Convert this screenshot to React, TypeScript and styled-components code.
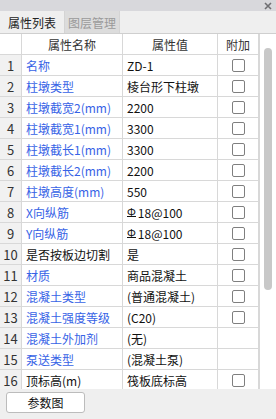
import React from "react";
import styled, { createGlobalStyle } from "styled-components";

const Global = createGlobalStyle`
  html, body { margin: 0; padding: 0; }
  body { background: #efefef; font-family: "Noto Sans CJK SC", "Noto Sans", sans-serif; }
  * { box-sizing: border-box; }
`;

const Panel = styled.div`
  width: 276px;
  height: 419px;
  display: flex;
  flex-direction: column;
  background: #efefef;
  overflow: hidden;
`;

const TitleBar = styled.div`
  height: 11px;
  background: #d8d8dc;
  display: flex;
  justify-content: flex-end;
  align-items: center;
  padding-right: 4px;
`;

const TabStrip = styled.div`
  height: 23px;
  display: flex;
  background: #efefef;
  border-bottom: 1px solid #cfcfcf;
`;

const Tab = styled.div<{ $active?: boolean }>`
  width: ${(p) => (p.$active ? 65 : 55)}px;
  display: flex;
  align-items: center;
  justify-content: center;
  font-size: 12px;
  color: ${(p) => (p.$active ? "#222" : "#9a9a9a")};
  background: ${(p) => (p.$active ? "#efefef" : "#dcdcdc")};
  border-right: 1px solid #d4d4d4;
`;

const Body = styled.div`
  height: 355px;
  display: flex;
  background: #fff;
  overflow: hidden;
`;

const Grid = styled.div`
  width: 259px;
  display: grid;
  grid-template-columns: 22px 101px 95px 41px;
  grid-auto-rows: 21px;
  align-content: start;
`;

const Cell = styled.div<{ $align?: string; $color?: string; $bg?: string }>`
  display: flex;
  align-items: center;
  justify-content: ${(p) => p.$align || "flex-start"};
  padding: 0 4px;
  font-size: 12px;
  color: ${(p) => p.$color || "#111"};
  background: ${(p) => p.$bg || "#fff"};
  border-right: 1px solid #d8d8d8;
  border-bottom: 1px solid #d8d8d8;
  white-space: nowrap;
  overflow: hidden;
`;

const HeadCell = styled(Cell)`
  color: #333;
  justify-content: center;
`;

const IndexCell = styled(Cell)`
  justify-content: center;
  padding: 0;
  font-size: 13px;
  color: #333;
  background: #f1f1f1;
`;

const Check = styled.span`
  width: 13px;
  height: 13px;
  border: 1px solid #7f7f7f;
  border-radius: 2px;
  background: #fff;
`;

const Grade = styled.span`
  display: inline-block;
  font-size: 11px;
  line-height: 10px;
  border-bottom: 1px solid #111;
  margin-right: 2px;
  transform: translateY(-1px);
`;

const ScrollTrack = styled.div`
  width: 17px;
  border-left: 1px solid #d8d8d8;
  background: #fff;
  padding: 14px 0 0 4px;
`;

const Thumb = styled.div`
  width: 8px;
  height: 242px;
  border-radius: 4px;
  background: #c8c8c8;
`;

const Footer = styled.div`
  flex: 1;
  padding: 3px 0 0 6px;
  background: #efefef;
`;

const Button = styled.button`
  width: 79px;
  height: 21px;
  background: #fff;
  border: 1px solid #bcbcbc;
  border-radius: 3px;
  font-family: "Noto Sans CJK SC", sans-serif;
  font-size: 12px;
  color: #111;
  padding: 0;
  display: flex;
  align-items: center;
  justify-content: center;
`;

const BLUE = "#3763e6";

type Row = { name: string; value: React.ReactNode; blue: boolean; check: boolean };

const rebar = (
  <>
    <Grade>Φ</Grade>18@100
  </>
);

const rows: Row[] = [
  { name: "名称", value: "ZD-1", blue: true, check: true },
  { name: "柱墩类型", value: "棱台形下柱墩", blue: true, check: true },
  { name: "柱墩截宽2(mm)", value: "2200", blue: true, check: true },
  { name: "柱墩截宽1(mm)", value: "3300", blue: true, check: true },
  { name: "柱墩截长1(mm)", value: "3300", blue: true, check: true },
  { name: "柱墩截长2(mm)", value: "2200", blue: true, check: true },
  { name: "柱墩高度(mm)", value: "550", blue: true, check: true },
  { name: "X向纵筋", value: rebar, blue: true, check: true },
  { name: "Y向纵筋", value: rebar, blue: true, check: true },
  { name: "是否按板边切割", value: "是", blue: false, check: true },
  { name: "材质", value: "商品混凝土", blue: true, check: true },
  { name: "混凝土类型", value: "(普通混凝土)", blue: true, check: true },
  { name: "混凝土强度等级", value: "(C20)", blue: true, check: true },
  { name: "混凝土外加剂", value: "(无)", blue: true, check: false },
  { name: "泵送类型", value: "(混凝土泵)", blue: true, check: false },
  { name: "顶标高(m)", value: "筏板底标高", blue: false, check: true },
];

export default function App() {
  return (
    <Panel>
      <Global />
      <TitleBar>
        <svg width="8" height="8" viewBox="0 0 8 8">
          <path d="M1 1 L7 7 M7 1 L1 7" stroke="#6e6e72" strokeWidth="1.6" />
        </svg>
      </TitleBar>
      <TabStrip>
        <Tab $active>属性列表</Tab>
        <Tab>图层管理</Tab>
      </TabStrip>
      <Body>
        <Grid>
          <HeadCell />
          <HeadCell>属性名称</HeadCell>
          <HeadCell>属性值</HeadCell>
          <HeadCell>附加</HeadCell>
          {rows.map((r, i) => (
            <React.Fragment key={i}>
              <IndexCell>{i + 1}</IndexCell>
              <Cell $color={r.blue ? BLUE : "#111"}>{r.name}</Cell>
              <Cell>{r.value}</Cell>
              <Cell $align="center">{r.check && <Check />}</Cell>
            </React.Fragment>
          ))}
        </Grid>
        <ScrollTrack>
          <Thumb />
        </ScrollTrack>
      </Body>
      <Footer>
        <Button>参数图</Button>
      </Footer>
    </Panel>
  );
}
